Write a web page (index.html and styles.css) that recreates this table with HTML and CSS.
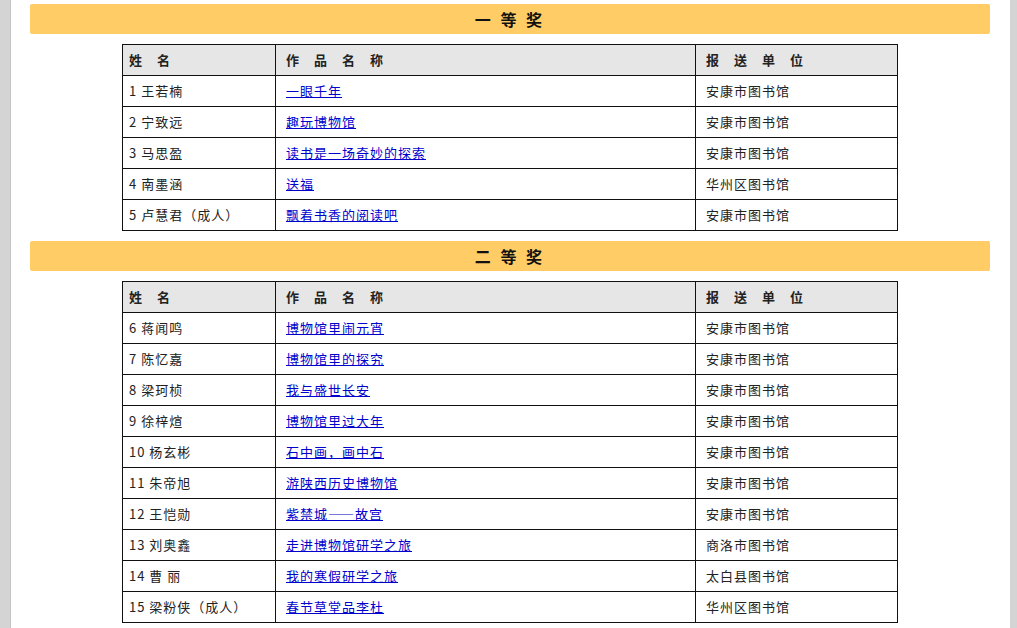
FILE: index.html
```html
<!DOCTYPE html>
<html lang="zh">
<head>
<meta charset="utf-8">
<link rel="stylesheet" href="styles.css">
</head>
<body>
<div class="page">
  <div class="bar">一 等 奖</div>
  <table class="list">
    <colgroup><col class="c1"><col class="c2"><col class="c3"></colgroup>
    <tr class="head"><td>姓　名</td><td>作　品　名　称</td><td>报　送　单　位</td></tr>
    <tr><td>1 王若楠</td><td><a href="#">一眼千年</a></td><td>安康市图书馆</td></tr>
    <tr><td>2 宁致远</td><td><a href="#">趣玩博物馆</a></td><td>安康市图书馆</td></tr>
    <tr><td>3 马思盈</td><td><a href="#">读书是一场奇妙的探索</a></td><td>安康市图书馆</td></tr>
    <tr><td>4 南墨涵</td><td><a href="#">送福</a></td><td>华州区图书馆</td></tr>
    <tr><td>5 卢慧君（成人）</td><td><a href="#">飘着书香的阅读吧</a></td><td>安康市图书馆</td></tr>
  </table>
  <div class="bar">二 等 奖</div>
  <table class="list">
    <colgroup><col class="c1"><col class="c2"><col class="c3"></colgroup>
    <tr class="head"><td>姓　名</td><td>作　品　名　称</td><td>报　送　单　位</td></tr>
    <tr><td>6 蒋闻鸣</td><td><a href="#">博物馆里闹元宵</a></td><td>安康市图书馆</td></tr>
    <tr><td>7 陈忆嘉</td><td><a href="#">博物馆里的探究</a></td><td>安康市图书馆</td></tr>
    <tr><td>8 梁珂桢</td><td><a href="#">我与盛世长安</a></td><td>安康市图书馆</td></tr>
    <tr><td>9 徐梓煊</td><td><a href="#">博物馆里过大年</a></td><td>安康市图书馆</td></tr>
    <tr><td>10 杨玄彬</td><td><a href="#">石中画，画中石</a></td><td>安康市图书馆</td></tr>
    <tr><td>11 朱帝旭</td><td><a href="#">游陕西历史博物馆</a></td><td>安康市图书馆</td></tr>
    <tr><td>12 王恺勋</td><td><a href="#">紫禁城——故宫</a></td><td>安康市图书馆</td></tr>
    <tr><td>13 刘奥鑫</td><td><a href="#">走进博物馆研学之旅</a></td><td>商洛市图书馆</td></tr>
    <tr><td>14 曹 丽</td><td><a href="#">我的寒假研学之旅</a></td><td>太白县图书馆</td></tr>
    <tr><td>15 梁粉侠（成人）</td><td><a href="#">春节草堂品李杜</a></td><td>华州区图书馆</td></tr>
  </table>
</div>
</body>
</html>
```
FILE: styles.css
```css
html, body {
  margin: 0;
  padding: 0;
}
body {
  background: #d4d4d4;
  font-family: "Noto Sans CJK SC", "Liberation Sans", sans-serif;
  color: #222;
}
.page {
  background: #fff;
  margin: 0 7px 0 10px;
  box-shadow: inset 1px 0 0 #c4c4c4;
  padding: 4px 0 20px;
  min-height: 700px;
  box-sizing: border-box;
}
.bar {
  background: #ffcc66;
  margin: 0 20px;
  height: 30px;
  line-height: 30px;
  text-align: center;
  font-size: 16px;
  font-weight: bold;
  letter-spacing: 3px;
  color: #111;
  border-radius: 2px;
}
.list {
  border-collapse: collapse;
  width: 775px;
  margin: 10px auto 10px;
  table-layout: fixed;
}
.c1 { width: 153px; }
.c2 { width: 420px; }
.c3 { width: 202px; }
.list td {
  border: 1px solid #111;
  height: 30px;
  padding: 0 0 0 10px;
  box-sizing: border-box;
  font-size: 13px;
  letter-spacing: 1px;
  line-height: 30px;
  white-space: nowrap;
}
.list td:first-child {
  padding-left: 6px;
}
.list tr.head td {
  background: #e6e6e6;
  font-weight: bold;
}
.list a {
  color: #0000cc;
  text-decoration: underline;
}
```
